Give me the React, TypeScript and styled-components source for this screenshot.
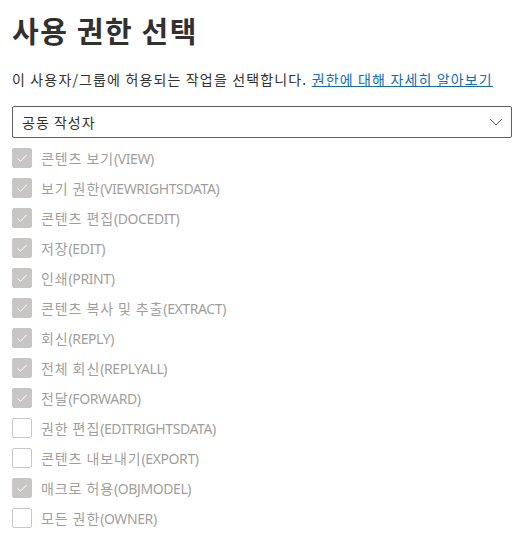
import React from "react";
import styled, { createGlobalStyle } from "styled-components";

const Global = createGlobalStyle`
  html, body { margin: 0; padding: 0; background: #ffffff; }
  body { font-family: "Noto Sans", "Noto Sans CJK KR", sans-serif; color: #323130; }
`;

const Page = styled.div`
  padding: 8px 12px 0 12px;
  width: 500px;
  display: flex;
  flex-direction: column;
`;

const Title = styled.h1`
  margin: 0;
  font-family: "Noto Sans CJK KR", sans-serif;
  font-size: 29px;
  font-weight: 700;
  line-height: 44px;
  color: #323130;
  letter-spacing: 1.6px;
`;

const Intro = styled.p`
  margin: 17px 0 0 0;
  font-family: "Noto Sans CJK KR", sans-serif;
  font-size: 14px;
  line-height: 20px;
  color: #323130;
  letter-spacing: 1.15px;
  white-space: nowrap;
`;

const Link = styled.a`
  color: #0f6cbd;
  text-decoration: underline;
  cursor: pointer;
`;

const Select = styled.div`
  margin-top: 17px;
  height: 30px;
  border: 1px solid #605e5c;
  border-radius: 2px;
  display: flex;
  align-items: center;
  justify-content: space-between;
  padding: 0 8px 0 9px;
  font-family: "Noto Sans CJK KR", sans-serif;
  font-size: 14px;
  color: #323130;
  letter-spacing: 1px;
`;

const List = styled.div`
  margin-top: 10px;
  display: flex;
  flex-direction: column;
  gap: 10px;
`;

const Row = styled.label`
  display: flex;
  align-items: center;
  gap: 9px;
  height: 20px;
`;

const Box = styled.span<{ $checked: boolean }>`
  box-sizing: border-box;
  width: 20px;
  height: 20px;
  border-radius: 2px;
  border: 1px solid #c8c6c4;
  background: ${(p) => (p.$checked ? "#c8c6c4" : "#ffffff")};
  display: flex;
  align-items: center;
  justify-content: center;
  flex: none;
`;

const Label = styled.span`
  font-family: "Noto Sans CJK KR", sans-serif;
  font-size: 14px;
  color: #a19f9d;
  line-height: 20px;
  white-space: nowrap;
  letter-spacing: 0.9px;
`;

const Latin = styled.span`
  font-family: "Noto Sans", sans-serif;
  letter-spacing: -0.4px;
`;

const items: [string, string, boolean][] = [
  ["콘텐츠 보기", "(VIEW)", true],
  ["보기 권한", "(VIEWRIGHTSDATA)", true],
  ["콘텐츠 편집", "(DOCEDIT)", true],
  ["저장", "(EDIT)", true],
  ["인쇄", "(PRINT)", true],
  ["콘텐츠 복사 및 추출", "(EXTRACT)", true],
  ["회신", "(REPLY)", true],
  ["전체 회신", "(REPLYALL)", true],
  ["전달", "(FORWARD)", true],
  ["권한 편집", "(EDITRIGHTSDATA)", false],
  ["콘텐츠 내보내기", "(EXPORT)", false],
  ["매크로 허용", "(OBJMODEL)", true],
  ["모든 권한", "(OWNER)", false],
];

const Check = () => (
  <svg width="12" height="12" viewBox="0 0 12 12" fill="none">
    <path d="M1.5 6.3 L4.5 9.2 L10.5 3" stroke="#ffffff" strokeWidth="1" />
  </svg>
);

const Chevron = () => (
  <svg width="14" height="8" viewBox="0 0 14 8" fill="none">
    <path d="M1 1 L7 7 L13 1" stroke="#605e5c" strokeWidth="1" />
  </svg>
);

export default function App() {
  return (
    <>
      <Global />
      <Page>
        <Title>사용 권한 선택</Title>
        <Intro>
          이 사용자/그룹에 허용되는 작업을 선택합니다. <Link>권한에 대해 자세히 알아보기</Link>
        </Intro>
        <Select>
          <span>공동 작성자</span>
          <Chevron />
        </Select>
        <List>
          {items.map(([ko, en, checked]) => (
            <Row key={en}>
              <Box $checked={checked}>{checked && <Check />}</Box>
              <Label>
                {ko}
                <Latin>{en}</Latin>
              </Label>
            </Row>
          ))}
        </List>
      </Page>
    </>
  );
}
